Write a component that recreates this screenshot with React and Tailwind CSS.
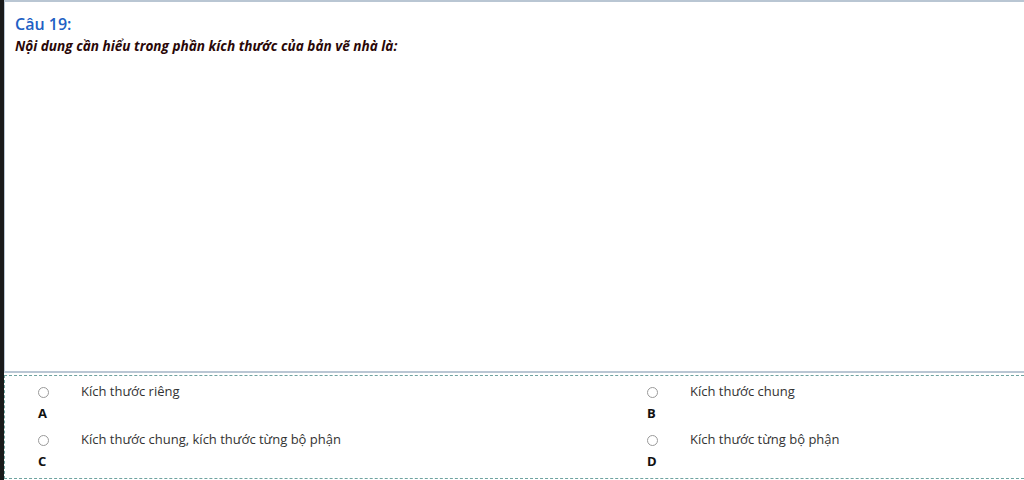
import React from 'react';

const answers = [
  { key: 'A', text: 'Kích thước riêng' },
  { key: 'B', text: 'Kích thước chung' },
  { key: 'C', text: 'Kích thước chung, kích thước từng bộ phận' },
  { key: 'D', text: 'Kích thước từng bộ phận' },
];

const Answer = ({ item }) => (
  <div className="h-[48px]">
    <div className="flex items-center h-[20px]">
      <span className="ml-[33px] w-[11px] h-[11px] rounded-full border border-[#9a9a9a] bg-white" />
      <span className="ml-[32px] text-[13px] text-[#333]">{item.text}</span>
    </div>
    <div className="ml-[33px] mt-[1px] text-[13px] font-bold text-[#111] leading-[20px]">{item.key}</div>
  </div>
);

export default function App() {
  return (
    <div className="w-[1024px] h-[480px] bg-white flex overflow-hidden" style={{ fontFamily: '"Open Sans", "Noto Sans", sans-serif' }}>
      <div className="w-[4px] bg-[#1a1a1a]" />
      <div className="flex-1 flex flex-col">
        <div className="h-[373px] border-t-2 border-b-2 border-l border-[#b9c6d3] pl-[10px] pt-[11px]">
          <div className="text-[16px] font-semibold text-[#2160c4] leading-[22px]">Câu 19:</div>
          <div className="text-[13.6px] font-bold italic text-[#2a0808] leading-[22px]">
            Nội dung cần hiểu trong phần kích thước của bản vẽ nhà là:
          </div>
        </div>
        <div className="mt-[2px] h-[104px] border-t border-b border-l border-dashed border-[#6fa3a0] pt-[6px] grid grid-cols-[609px_1fr]">
          <div>
            <Answer item={answers[0]} />
            <Answer item={answers[2]} />
          </div>
          <div>
            <Answer item={answers[1]} />
            <Answer item={answers[3]} />
          </div>
        </div>
      </div>
    </div>
  );
}
